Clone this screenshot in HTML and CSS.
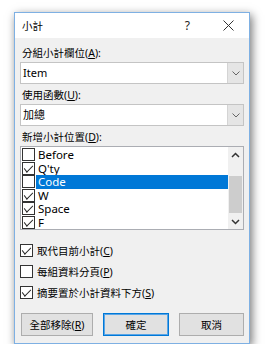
FILE: index.html
```html
<!DOCTYPE html>
<html lang="zh-Hant">

<head>
    <meta charset="UTF-8">
    <meta name="viewport" content="width=device-width, initial-scale=1.0">
    <title>小計</title>

    <link rel="stylesheet" href="styles.css">
</head>

<body>
    <div class="Dialog">
        <div class="Dialog-title">
            <span class="Dialog-caption">小計</span>
            <span class="Dialog-help">?</span>
            <svg class="Dialog-close" width="11" height="11" viewBox="0 0 11 11">
                <path d="M0.5 0.5 L10.5 10.5 M10.5 0.5 L0.5 10.5" stroke="#333" stroke-width="1" fill="none" />
            </svg>
        </div>

        <div class="Dialog-body">
            <div class="Field-label">分組小計欄位(<u>A</u>):</div>
            <div class="Select">
                <div class="Select-value">Item</div>
                <div class="Select-arrow">
                    <svg width="8" height="5" viewBox="0 0 8 5">
                        <path d="M0.5 0.5 L4 4 L7.5 0.5" stroke="#666" stroke-width="1" fill="none" />
                    </svg>
                </div>
            </div>

            <div class="Field-label Field-label--gap">使用函數(<u>U</u>):</div>
            <div class="Select">
                <div class="Select-value">加總</div>
                <div class="Select-arrow">
                    <svg width="8" height="5" viewBox="0 0 8 5">
                        <path d="M0.5 0.5 L4 4 L7.5 0.5" stroke="#666" stroke-width="1" fill="none" />
                    </svg>
                </div>
            </div>

            <div class="Field-label Field-label--gap">新增小計位置(<u>D</u>):</div>
            <div class="List">
                <div class="List-items">
                    <div class="List-item"><span class="Check"></span><span class="List-text">Before</span></div>
                    <div class="List-item"><span class="Check is-checked"></span><span class="List-text">Q'ty</span></div>
                    <div class="List-item is-selected"><span class="Check"></span><span class="List-text">Code</span></div>
                    <div class="List-item"><span class="Check is-checked"></span><span class="List-text">W</span></div>
                    <div class="List-item"><span class="Check is-checked"></span><span class="List-text">Space</span></div>
                    <div class="List-item"><span class="Check is-checked"></span><span class="List-text">F</span></div>
                </div>
                <div class="Scroll">
                    <div class="Scroll-btn">
                        <svg width="9" height="6" viewBox="0 0 9 6">
                            <path d="M1 5 L4.5 1.5 L8 5" stroke="#333" stroke-width="1.5" fill="none" />
                        </svg>
                    </div>
                    <div class="Scroll-track">
                        <div class="Scroll-thumb"></div>
                    </div>
                    <div class="Scroll-btn">
                        <svg width="9" height="6" viewBox="0 0 9 6">
                            <path d="M1 1 L4.5 4.5 L8 1" stroke="#333" stroke-width="1.5" fill="none" />
                        </svg>
                    </div>
                </div>
            </div>

            <div class="Options">
                <div class="Option"><span class="Check Check--big is-checked"></span>取代目前小計(<u>C</u>)</div>
                <div class="Option"><span class="Check Check--big"></span>每組資料分頁(<u>P</u>)</div>
                <div class="Option"><span class="Check Check--big is-checked"></span>摘要置於小計資料下方(<u>S</u>)</div>
            </div>

            <div class="Buttons">
                <div class="Button Button--wide">全部移除(<u>R</u>)</div>
                <div class="Button Button--default">確定</div>
                <div class="Button">取消</div>
            </div>
        </div>
    </div>
</body>

</html>
```

FILE: styles.css
```css
html,
body {
    background: #ffffff;
    margin: 0;
}

body {
    padding: 12px 0 0 14px;
    font-family: "Noto Sans", "Noto Sans CJK TC", sans-serif;
    font-size: 11px;
    color: #000000;
}

u {
    text-decoration: underline;
    text-underline-offset: 1px;
}

.Dialog {
    width: 236px;
    height: 332px;
    box-sizing: border-box;
    border: 1px solid #7eb0e3;
    background: #f0f0f0;
    box-shadow: 2px 3px 9px rgba(0, 0, 0, 0.55);
    display: flex;
    flex-direction: column;
}

.Dialog-title {
    height: 25px;
    background: #ffffff;
    display: flex;
    align-items: center;
    padding: 0 0 0 7px;
}

.Dialog-caption {
    font-size: 10.5px;
    flex: 1;
}

.Dialog-help {
    font-size: 12px;
    margin-right: 33px;
    color: #222;
}

.Dialog-close {
    margin-right: 15px;
}

.Dialog-body {
    padding: 8px 5px 0 5px;
}

.Field-label {
    font-size: 10.5px;
    line-height: 14px;
    padding-left: 2px;
    margin-bottom: 2px;
}

.Field-label--gap {
    margin-top: 4px;
}

.Select {
    height: 22px;
    box-sizing: border-box;
    border: 1px solid #c4c4c4;
    background: #ffffff;
    display: flex;
}

.Select-value {
    flex: 1;
    padding-left: 2px;
    line-height: 20px;
}

.Select-arrow {
    width: 15px;
    background: #e5e5e5;
    border-left: 1px solid #d4d4d4;
    display: flex;
    align-items: center;
    justify-content: center;
}

.List {
    height: 84px;
    box-sizing: border-box;
    border: 1px solid #abadb3;
    background: #ffffff;
    display: flex;
    overflow: hidden;
}

.List-items {
    flex: 1;
    padding-top: 1px;
}

.List-item {
    height: 13.5px;
    display: flex;
    align-items: center;
}

.List-item .Check {
    margin-left: 1px;
    width: 11px;
    height: 11px;
}

.List-text {
    flex: 1;
    height: 13.5px;
    line-height: 13.5px;
    padding-left: 2px;
    margin-left: 1px;
    font-size: 11.5px;
}

.List-item.is-selected .List-text {
    background: #0078d7;
    color: #ffffff;
}

.Check {
    display: inline-block;
    box-sizing: content-box;
    width: 11px;
    height: 11px;
    border: 1px solid #333333;
    background: #ffffff;
    position: relative;
    flex: none;
}

.Check.is-checked::after {
    content: "";
    position: absolute;
    left: 1px;
    top: 2px;
    width: 8px;
    height: 4px;
    border-left: 1px solid #222;
    border-bottom: 1px solid #222;
    transform: rotate(-45deg) skewX(-8deg);
    transform-origin: center;
}

.Scroll {
    width: 15px;
    background: #f0f0f0;
    display: flex;
    flex-direction: column;
}

.Scroll-btn {
    height: 15px;
    display: flex;
    align-items: center;
    justify-content: center;
    flex: none;
}

.Scroll-track {
    flex: 1;
    padding-top: 14px;
}

.Scroll-thumb {
    height: 37px;
    margin: 0 1px;
    background: #cdcdcd;
}

.Options {
    margin-top: 10px;
}

.Option {
    height: 21px;
    display: flex;
    align-items: center;
    font-size: 10.5px;
}

.Check--big {
    width: 11px;
    height: 11px;
    margin-right: 4px;
}

.Buttons {
    margin-top: 10px;
    display: flex;
    justify-content: space-between;
    padding: 0 0 0 1px;
}

.Button {
    width: 65px;
    height: 23px;
    box-sizing: border-box;
    border: 1px solid #adadad;
    background: #e1e1e1;
    display: flex;
    align-items: center;
    justify-content: center;
    font-size: 10.5px;
}

.Button--wide {
    width: 72px;
}

.Button--default {
    width: 66px;
    border-color: #0078d7;
    box-shadow: inset 0 0 0 1px #5aa5e6;
}
```
